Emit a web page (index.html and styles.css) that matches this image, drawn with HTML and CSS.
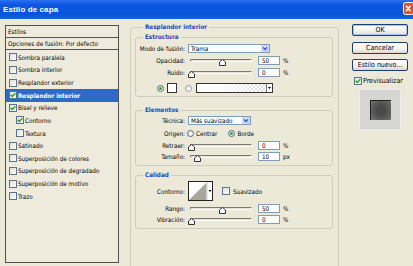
FILE: index.html
```html
<!DOCTYPE html>
<html lang="es">
<head>
<meta charset="utf-8">
<title>Estilo de capa</title>
<link rel="stylesheet" href="styles.css">
</head>
<body>
<div class="window">
  <div class="titlebar">
    <span class="title">Estilo de capa</span>
    <span class="close"><svg width="10" height="13" viewBox="0 0 10 13"><rect x="0.5" y="0.5" width="10" height="12" rx="2" fill="#d9532c" stroke="#fff"/><path d="M3 3.8 L7.5 9.2 M7.5 3.8 L3 9.2" stroke="#fff" stroke-width="1.4"/></svg></span>
  </div>
  <div class="content">
    <div class="styles">
      <div class="styles-head">Estilos</div>
      <div class="styles-opt">Opciones de fusión: Por defecto</div>
      <ul class="style-list">
        <li><span class="cb"></span>Sombra paralela</li>
        <li><span class="cb"></span>Sombra interior</li>
        <li><span class="cb"></span>Resplandor exterior</li>
        <li class="sel"><span class="cb"><svg width="6" height="6" viewBox="0 0 6 6"><path d="M0.6 2.8 L2.3 4.5 L5.4 1.2" fill="none" stroke="#21a121" stroke-width="1.3"/></svg></span>Resplandor interior</li>
        <li><span class="cb"><svg width="6" height="6" viewBox="0 0 6 6"><path d="M0.6 2.8 L2.3 4.5 L5.4 1.2" fill="none" stroke="#21a121" stroke-width="1.3"/></svg></span>Bisel y relieve</li>
        <li class="sub"><span class="cb"><svg width="6" height="6" viewBox="0 0 6 6"><path d="M0.6 2.8 L2.3 4.5 L5.4 1.2" fill="none" stroke="#21a121" stroke-width="1.3"/></svg></span>Contorno</li>
        <li class="sub"><span class="cb"></span>Textura</li>
        <li><span class="cb"></span>Satinado</li>
        <li><span class="cb"></span>Superposición de colores</li>
        <li><span class="cb"></span>Superposición de degradado</li>
        <li><span class="cb"></span>Superposición de motivo</li>
        <li><span class="cb"></span>Trazo</li>
      </ul>
    </div>

    <fieldset class="group main">
      <legend>Resplandor interior</legend>

      <fieldset class="group sub estructura">
        <legend>Estructura</legend>
        <div class="row">
          <span class="lbl">Modo de fusión:</span>
          <span class="select wide"><span class="val">Trama</span><span class="arrow"><svg width="6" height="5" viewBox="0 0 6 5"><path d="M1 1.3 L3 3.4 L5 1.3" fill="none" stroke="#2d4fa8" stroke-width="1.2"/></svg></span></span>
        </div>
        <div class="row">
          <span class="lbl">Opacidad:</span>
          <span class="slider"><span class="track"></span><span class="thumb" style="left:50%"><svg width="7" height="7" viewBox="0 0 7 7"><polygon points="3.5,0.5 6.5,3 6.5,6.5 0.5,6.5 0.5,3" fill="#fff" stroke="#333"/></svg></span></span>
          <span class="num">50</span><span class="unit">%</span>
        </div>
        <div class="row">
          <span class="lbl">Ruido:</span>
          <span class="slider"><span class="track"></span><span class="thumb" style="left:0%"><svg width="7" height="7" viewBox="0 0 7 7"><polygon points="3.5,0.5 6.5,3 6.5,6.5 0.5,6.5 0.5,3" fill="#fff" stroke="#333"/></svg></span></span>
          <span class="num">0</span><span class="unit">%</span>
        </div>
        <div class="row colors">
          <span class="radio on"></span>
          <span class="swatch"></span>
          <span class="radio grad-radio"></span>
          <span class="gradient"><span class="grad-fill"></span><span class="grad-arrow"><svg width="5" height="4" viewBox="0 0 5 4"><path d="M1 1 L4 1 L2.5 3 Z" fill="#000"/></svg></span></span>
        </div>
      </fieldset>

      <fieldset class="group sub elementos">
        <legend>Elementos</legend>
        <div class="row">
          <span class="lbl">Técnica:</span>
          <span class="select narrow"><span class="val">Más suavizado</span><span class="arrow"><svg width="6" height="5" viewBox="0 0 6 5"><path d="M1 1.3 L3 3.4 L5 1.3" fill="none" stroke="#2d4fa8" stroke-width="1.2"/></svg></span></span>
        </div>
        <div class="row origen">
          <span class="lbl">Origen:</span>
          <span class="radio first"></span><span class="rtext">Centrar</span>
          <span class="radio on second"></span><span class="rtext">Borde</span>
        </div>
        <div class="row">
          <span class="lbl">Retraer:</span>
          <span class="slider"><span class="track"></span><span class="thumb" style="left:0%"><svg width="7" height="7" viewBox="0 0 7 7"><polygon points="3.5,0.5 6.5,3 6.5,6.5 0.5,6.5 0.5,3" fill="#fff" stroke="#333"/></svg></span></span>
          <span class="num">0</span><span class="unit">%</span>
        </div>
        <div class="row tight">
          <span class="lbl">Tamaño:</span>
          <span class="slider"><span class="track"></span><span class="thumb" style="left:10%"><svg width="7" height="7" viewBox="0 0 7 7"><polygon points="3.5,0.5 6.5,3 6.5,6.5 0.5,6.5 0.5,3" fill="#fff" stroke="#333"/></svg></span></span>
          <span class="num">10</span><span class="unit">px</span>
        </div>
      </fieldset>

      <fieldset class="group sub calidad">
        <legend>Calidad</legend>
        <div class="row contour-row">
          <span class="lbl">Contorno:</span>
          <span class="contour"><svg width="25" height="20" viewBox="0 0 25 20"><rect x="0.5" y="0.5" width="24" height="19" fill="#fff" stroke="#222"/><polygon points="1,19 18.5,1.5 18.5,19" fill="#a9a79c"/><line x1="19" y1="1" x2="19" y2="19" stroke="#cfcfcf"/><path d="M20.5 9 L23.5 9 L22 11 Z" fill="#000"/></svg></span>
          <span class="cb plain"></span><span class="cbtext">Suavizado</span>
        </div>
        <div class="row">
          <span class="lbl">Rango:</span>
          <span class="slider"><span class="track"></span><span class="thumb" style="left:50%"><svg width="7" height="7" viewBox="0 0 7 7"><polygon points="3.5,0.5 6.5,3 6.5,6.5 0.5,6.5 0.5,3" fill="#fff" stroke="#333"/></svg></span></span>
          <span class="num">50</span><span class="unit">%</span>
        </div>
        <div class="row tight">
          <span class="lbl">Vibración:</span>
          <span class="slider"><span class="track"></span><span class="thumb" style="left:0%"><svg width="7" height="7" viewBox="0 0 7 7"><polygon points="3.5,0.5 6.5,3 6.5,6.5 0.5,6.5 0.5,3" fill="#fff" stroke="#333"/></svg></span></span>
          <span class="num">0</span><span class="unit">%</span>
        </div>
      </fieldset>
    </fieldset>

    <div class="side">
      <button class="btn default">OK</button>
      <button class="btn">Cancelar</button>
      <button class="btn">Estilo nuevo...</button>
      <div class="preview-check"><span class="cb"><svg width="6" height="6" viewBox="0 0 6 6"><path d="M0.6 2.8 L2.3 4.5 L5.4 1.2" fill="none" stroke="#21a121" stroke-width="1.3"/></svg></span>Previsualizar</div>
      <div class="preview"><span class="preview-square"></span></div>
    </div>
  </div>
</div>
</body>
</html>
```

FILE: styles.css
```css
* { box-sizing: border-box; }
html, body { margin: 0; padding: 0; }
body {
  width: 413px;
  height: 266px;
  overflow: hidden;
  background: #ece9d8;
  font-family: "DejaVu Sans Condensed", "Liberation Sans", sans-serif;
  font-size: 6.3px;
  color: #000;
}
.window {
  width: 413px;
  height: 266px;
  display: flex;
  flex-direction: column;
  overflow: hidden;
}
.titlebar {
  flex: none;
  height: 19px;
  display: flex;
  align-items: center;
  justify-content: space-between;
  padding: 0 0 0 3px;
  background: linear-gradient(#2c70f2 0%, #0d57e2 25%, #0a52da 75%, #1b60e2 100%);
}
.title {
  color: #fff;
  font: bold 8px "Liberation Sans", sans-serif;
  letter-spacing: 0.1px;
}
.close { display: flex; width: 10px; height: 13px; margin-top: -2px; }

.content {
  flex: 1;
  display: flex;
  align-items: flex-start;
  padding-left: 5px;
  overflow: hidden;
}

/* ---- styles list ---- */
.styles {
  flex: none;
  width: 114px;
  height: 238px;
  margin-top: 6px;
  border: 1px solid #4f4f4f;
  background: #eeebdc;
}
.styles-head, .styles-opt {
  height: 12px;
  line-height: 11px;
  padding-left: 2px;
  border-bottom: 1px solid #555;
}
.style-list {
  list-style: none;
  margin: 0;
  padding: 1px 0 0 0;
}
.style-list li {
  height: 12.63px;
  display: flex;
  align-items: center;
  padding-left: 3px;
  white-space: nowrap;
}
.style-list li.sub { padding-left: 10px; }
.style-list li.sel {
  background: #316ac5;
  color: #fff;
  font-weight: bold;
}
.cb {
  flex: none;
  width: 8px;
  height: 8px;
  margin-right: 1px;
  border: 1px solid #5a7390;
  background: linear-gradient(135deg, #e2e2dc, #fbfbf8);
  display: inline-flex;
  align-items: center;
  justify-content: center;
}

/* ---- group boxes ---- */
.group {
  margin: 0;
  padding: 0;
  border: 1px solid #cfcdbd;
  border-radius: 3px;
  min-width: 0;
}
.group legend {
  padding: 0 2px;
  font-weight: bold;
  color: #1f47b8;
  line-height: 8px;
  height: 8px;
}
.main {
  flex: none;
  width: 209px;
  height: 262px;
  margin: 4px 0 0 11px;
  padding: 0 5px 0 4px;
}
.main > legend { margin-left: 8px; }
.sub > legend { margin-left: 7px; }
.estructura { margin-top: 2px; padding: 1px 0 2px 0; }
.elementos { margin-top: 9px; padding: 0 0 3px 0; }
.calidad { margin-top: 5px; padding: 1px 0 3px 0; }

.row {
  display: flex;
  align-items: center;
  height: 12px;
  white-space: nowrap;
}
.row.tight { margin-top: -1px; }
.row.origen { margin-top: 1px; }
.lbl {
  flex: none;
  width: 49px;
  text-align: right;
}
.select {
  display: flex;
  align-items: center;
  height: 9px;
  margin-left: 3px;
  border: 1px solid #7f9db9;
  background: #fff;
}
.select.wide { width: 82px; }
.select.narrow { width: 63px; }
.select .val { padding-left: 2px; }
.select .arrow {
  margin-left: auto;
  width: 8px;
  height: 7px;
  display: flex;
  align-items: center;
  justify-content: center;
  background: linear-gradient(#d3e0fd, #b2c6f6);
  border: 1px solid #c9d8fb;
}

.slider {
  position: relative;
  flex: none;
  width: 62px;
  height: 12px;
  margin-left: 5px;
  padding-top: 5px;
}
.track {
  display: block;
  height: 3px;
  border: 1px solid #7a7a72;
  border-bottom-color: #fff;
  border-right-color: #fff;
  border-radius: 1px;
  background: #e4e1d2;
}
.thumb {
  position: absolute;
  top: 5px;
  margin-left: -2px;
  display: flex;
}
.num {
  flex: none;
  width: 22px;
  height: 9px;
  margin-left: 6px;
  padding-left: 3px;
  line-height: 7px;
  border: 1px solid #7f9db9;
  background: #fff;
}
.unit { margin-left: 3px; }

.radio {
  flex: none;
  width: 7px;
  height: 7px;
  border-radius: 50%;
  border: 1px solid #4a6a90;
  background: radial-gradient(circle at 65% 65%, #fff, #dcdcd4);
  display: inline-flex;
  align-items: center;
  justify-content: center;
}
.radio.on::after {
  content: "";
  width: 3px;
  height: 3px;
  border-radius: 50%;
  background: #2aa22a;
}
.colors { margin-top: 4px; padding-left: 21px; }
.swatch {
  flex: none;
  width: 10px;
  height: 10px;
  margin-left: 3px;
  border: 1px solid #333;
  background: #fff;
}
.grad-radio { margin-left: 8px; border-color: #8fa6c2; }
.gradient {
  flex: none;
  display: flex;
  width: 77px;
  height: 10px;
  margin-left: 4px;
  border: 1px solid #333;
  background-color: #fff;
  background-image: conic-gradient(#dcdcdc 25%, #fff 0 50%, #dcdcdc 0 75%, #fff 0);
  background-size: 4px 4px;
}
.grad-fill {
  flex: 1;
  background: linear-gradient(to right, #fff 0%, #fff 25%, rgba(255,255,255,0) 100%);
}
.grad-arrow {
  flex: none;
  width: 6px;
  background: #fff;
  border-left: 1px solid #777;
  display: flex;
  align-items: center;
  justify-content: center;
}

.origen .radio.first { margin-left: 2px; }
.rtext { margin-left: 2px; }
.origen .radio.second { margin-left: 11px; }

.contour-row { height: 22px; }
.contour { display: flex; margin-left: 3px; }
.cb.plain { margin-left: 9px; margin-right: 0; }
.cbtext { margin-left: 3px; }

/* ---- side column ---- */
.side {
  flex: none;
  width: 56px;
  margin-left: 13px;
  margin-top: 5px;
  display: flex;
  flex-direction: column;
}
.btn {
  height: 12px;
  margin: 0 0 5.5px 0;
  padding: 0;
  border: 1px solid #1d3f74;
  border-radius: 2px;
  background: linear-gradient(#ffffff, #f3f2ec 60%, #dcd8cc);
  font-family: "DejaVu Sans Condensed", "Liberation Sans", sans-serif;
  font-size: 7px;
  line-height: 10px;
  color: #000;
}
.btn.default { box-shadow: inset 0 0 0 1px #a9c4f0; }
.preview-check {
  display: flex;
  align-items: center;
  height: 8px;
  margin-top: 0.5px;
  padding-left: 2px;
  font-size: 7px;
  white-space: nowrap;
}
.preview-check .cb { margin-right: 1px; }
.preview {
  align-self: center;
  width: 42px;
  height: 41px;
  margin-top: 4px;
  border: 1px solid #ebebeb;
  background: #d5d5d3;
  display: flex;
  align-items: center;
  justify-content: center;
}
.preview-square {
  width: 21px;
  height: 20px;
  border-top: 1px solid #1e1e1e;
  border-left: 1px solid #1e1e1e;
  background: radial-gradient(circle, #4a4a4a 30%, #5e5e5e 70%, #7a7a7a 100%);
}
```
